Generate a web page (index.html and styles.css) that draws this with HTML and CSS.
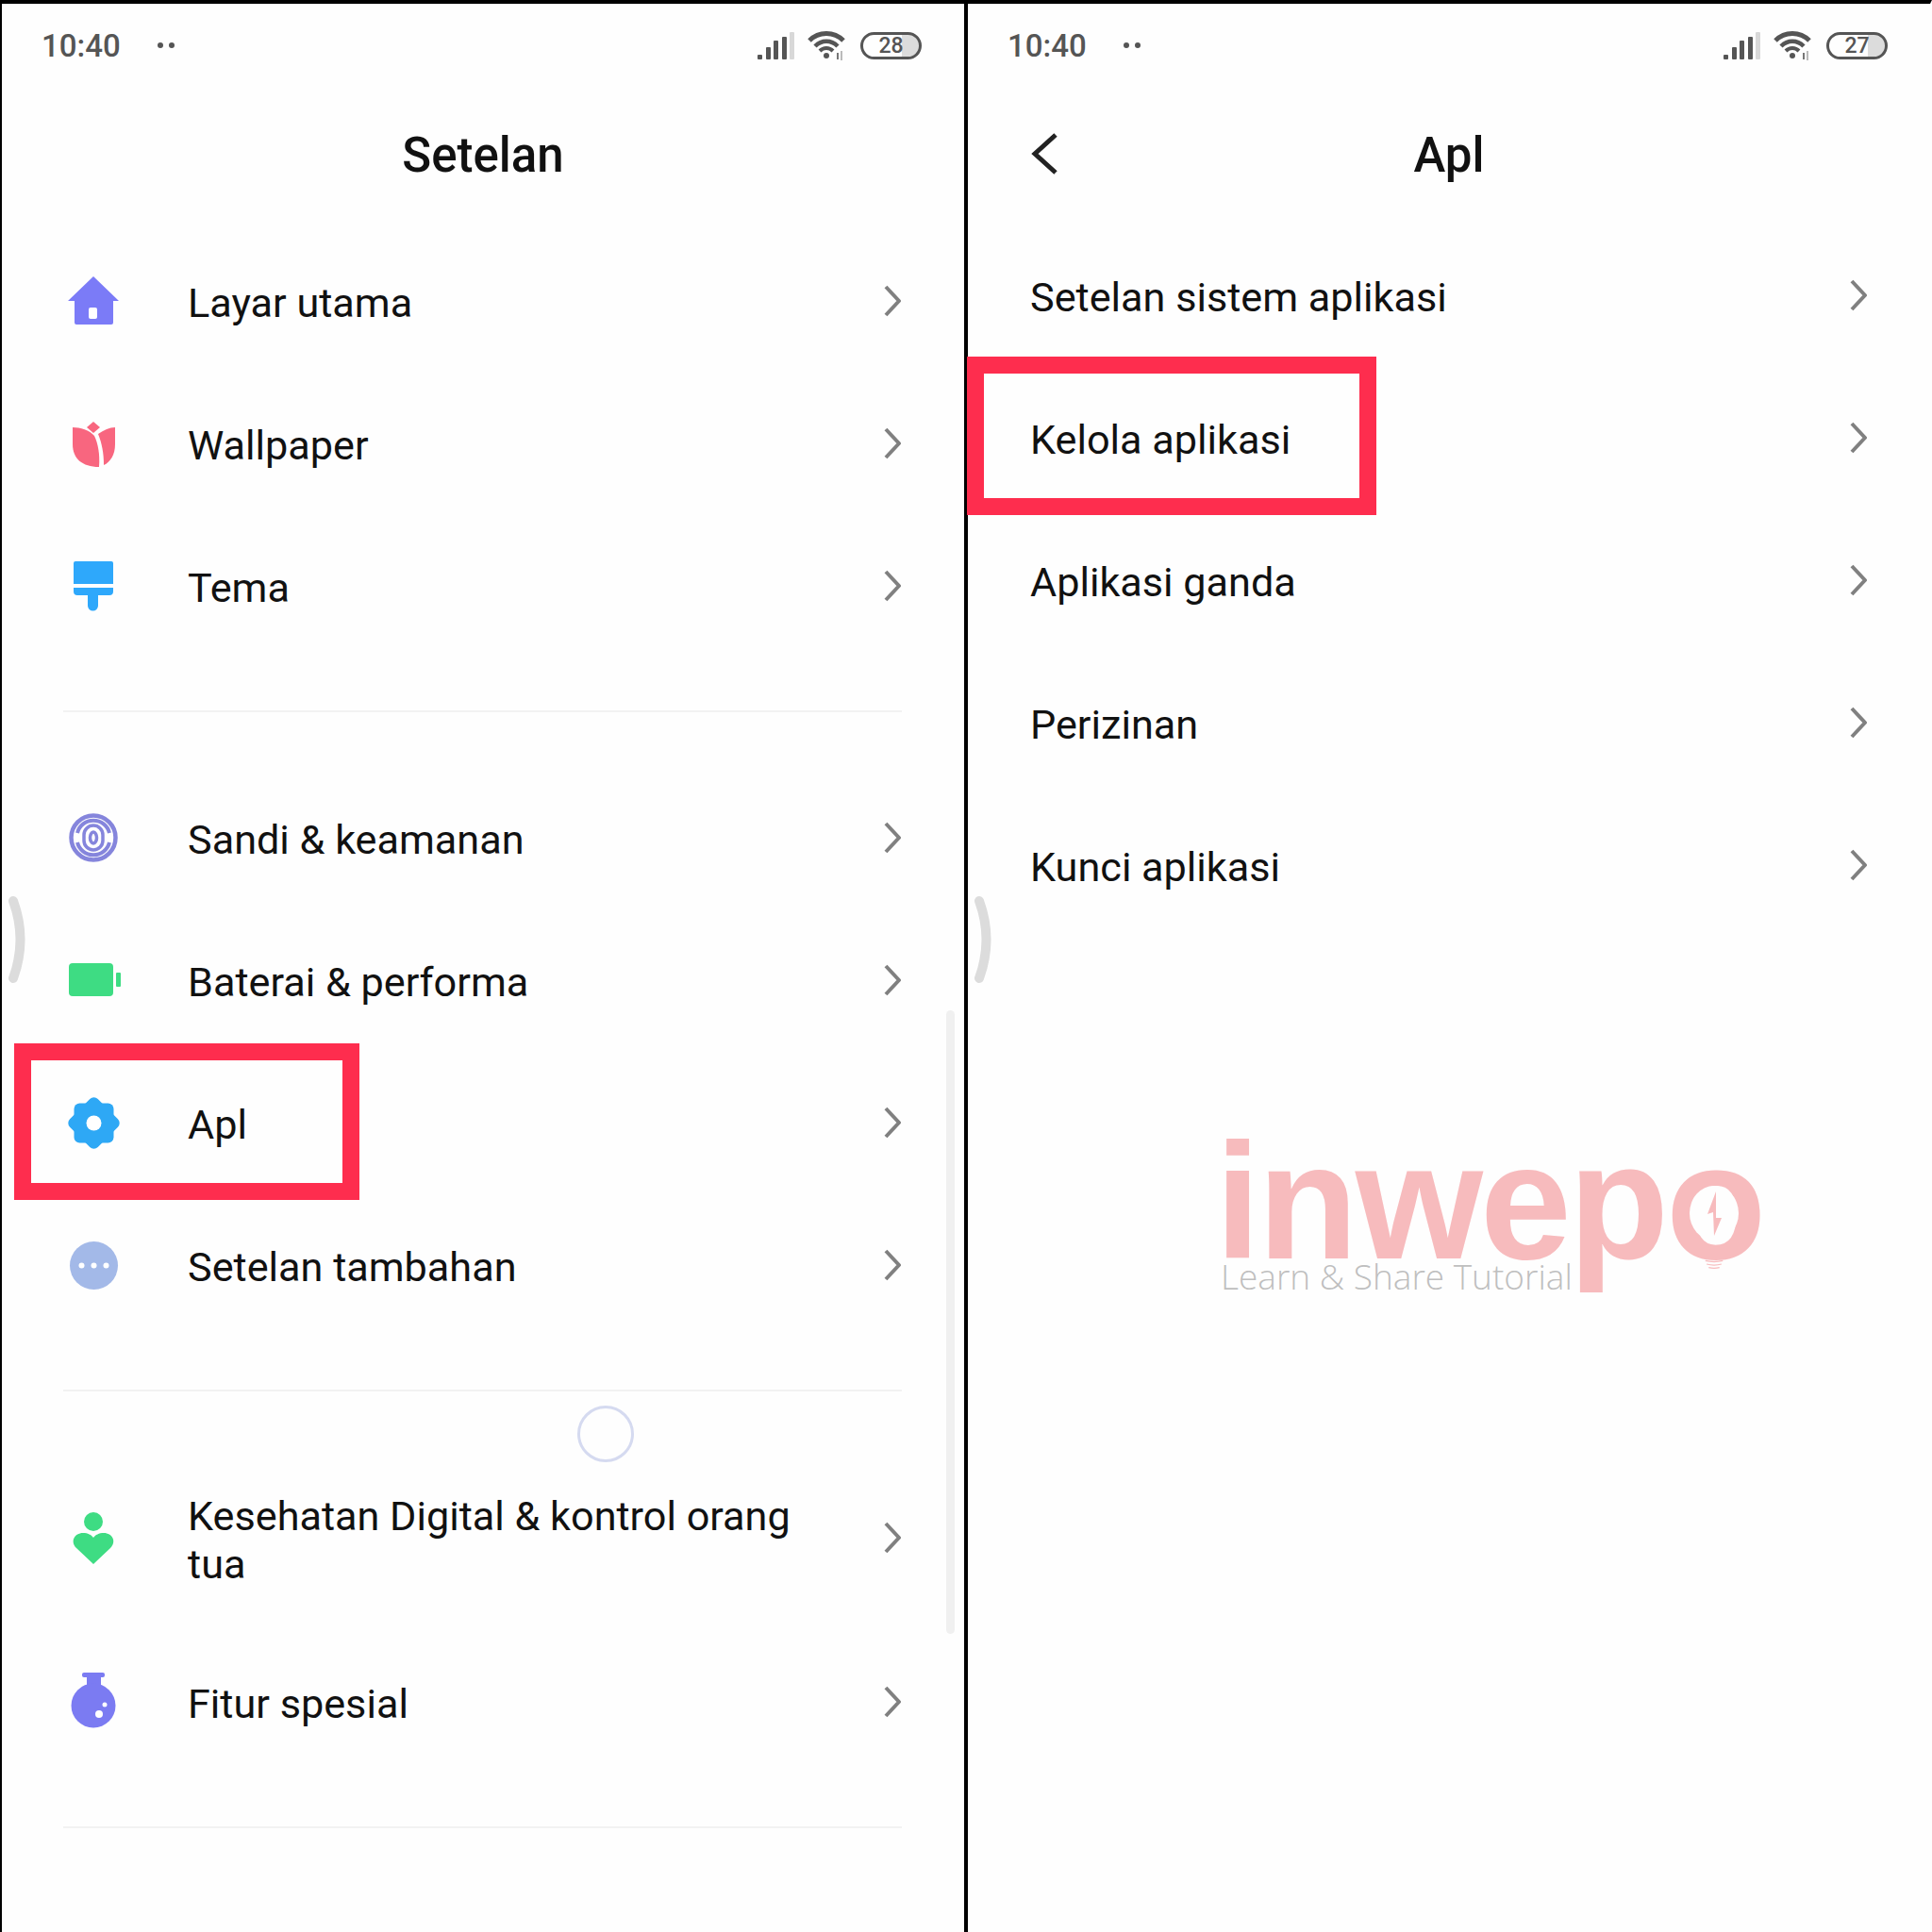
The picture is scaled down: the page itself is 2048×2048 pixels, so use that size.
FILE: index.html
```html
<!DOCTYPE html>
<html lang="en">
<head>
    <meta charset="UTF-8">
    <title>Setelan</title>
    <link rel="stylesheet" href="styles.css">
</head>
<body>
    <svg class="defs" width="0" height="0">
        <symbol id="chevron" viewBox="0 0 18 34"><path d="M2 2 L16 17 L2 32" fill="none" stroke="#808080" stroke-width="4" stroke-linejoin="round"/></symbol>
        <symbol id="signal" viewBox="0 0 39 29">
            <rect x="0" y="24" width="5" height="5" rx="1" fill="#555"/>
            <rect x="9" y="16" width="5" height="13" rx="1" fill="#555"/>
            <rect x="17" y="9" width="5" height="20" rx="1" fill="#555"/>
            <rect x="26" y="5" width="5" height="24" rx="1" fill="#555"/>
            <rect x="34" y="0" width="5" height="29" rx="1" fill="#d8d8d8"/>
        </symbol>
        <symbol id="wifi" viewBox="0 0 40 32">
            <path d="M2 11 C12 1 28 1 38 11" fill="none" stroke="#555" stroke-width="5"/>
            <path d="M8 17 C15 10 25 10 32 17" fill="none" stroke="#555" stroke-width="4.500"/>
            <path d="M13 22 C17 18 23 18 27 22" fill="none" stroke="#555" stroke-width="4"/>
            <circle cx="20" cy="27" r="3" fill="#555"/>
            <rect x="31" y="24" width="2" height="7" fill="#777"/>
            <rect x="35" y="22" width="2" height="10" fill="#bbb"/>
        </symbol>
        <symbol id="handle" viewBox="0 0 20 94"><path d="M6 6 Q21 47 6 88" fill="none" stroke="#dcdcdc" stroke-width="10" stroke-linecap="round"/></symbol>
    </svg>

    <div class="screen">
        <div class="status">
            <span class="time">10:40</span>
            <span class="dots"><i></i><i></i></span>
            <svg class="signal"><use href="#signal"/></svg>
            <svg class="wifi"><use href="#wifi"/></svg>
            <span class="battery">28</span>
        </div>
        <h1 class="title">Setelan</h1>

        <div class="list list-main">
            <div class="row">
                <svg class="icon" viewBox="0 0 64 64"><path d="M32 6 L59 32 L53 32 L53 55 Q53 57 51 57 L14 57 Q12 57 12 55 L12 32 L5 32 Z" fill="#7b7bf7"/><rect x="27" y="39" width="9" height="12" rx="2" fill="#fff"/></svg>
                <span class="label">Layar utama</span>
                <svg class="chevron"><use href="#chevron"/></svg>
            </div>
            <div class="row">
                <svg class="icon" viewBox="0 0 64 64"><path d="M32 9 L39 15 L32 21 L25 15 Z" fill="#f8667f"/><path d="M10 15 C18 15 28 18 33 24 C37 32 39 44 38 57 C20 57 10 48 10 33 Z" fill="#f8667f"/><path d="M55 15 C49 15 43 18 37 22 C41 32 43 42 43 55 C50 52 55 44 55 33 Z" fill="#f8667f"/></svg>
                <span class="label">Wallpaper</span>
                <svg class="chevron"><use href="#chevron"/></svg>
            </div>
            <div class="row">
                <svg class="icon" viewBox="0 0 64 64"><path d="M13 6 L51 6 Q53 6 53 8 L53 30 L11 30 L11 8 Q11 6 13 6 Z" fill="#2ea8fb"/><path d="M11 34 L53 34 L53 38 Q53 42 49 42 L37 42 L37 53 A5.500 5.500 0 0 1 26 53 L26 42 L15 42 Q11 42 11 38 Z" fill="#2ea8fb"/></svg>
                <span class="label">Tema</span>
                <svg class="chevron"><use href="#chevron"/></svg>
            </div>
        </div>
        <hr class="divider">

        <div class="list">
            <div class="row">
                <svg class="icon" viewBox="0 0 64 64" fill="none" stroke="#8585dc"><circle cx="32" cy="32" r="23.500" stroke-width="4.500"/><path d="M15 27 A17.500 17.500 0 0 1 49 27 M49 37 A17.500 17.500 0 0 1 15 37" stroke-width="4"/><path d="M22 29 A10 10 0 0 1 42 29 L42 35 A10 10 0 0 1 22 35 Z" stroke-width="3.500"/><ellipse cx="32" cy="32" rx="3.500" ry="6" stroke-width="3.500"/></svg>
                <span class="label">Sandi &amp; keamanan</span>
                <svg class="chevron"><use href="#chevron"/></svg>
            </div>
            <div class="row">
                <svg class="icon" viewBox="0 0 64 64"><rect x="6" y="14" width="47" height="35" rx="4" fill="#3edc83"/><rect x="56" y="24" width="5" height="15" rx="1" fill="#3edc83"/></svg>
                <span class="label">Baterai &amp; performa</span>
                <svg class="chevron"><use href="#chevron"/></svg>
            </div>
            <div class="row">
                <svg class="icon" viewBox="0 0 64 64"><rect x="11.500" y="11.500" width="42" height="42" rx="6" fill="#2ea8f5"/><rect x="11.500" y="11.500" width="42" height="42" rx="6" fill="#2ea8f5" transform="rotate(45 32.500 32.500)"/><circle cx="32.500" cy="32.500" r="8" fill="#fff"/></svg>
                <span class="label">Apl</span>
                <svg class="chevron"><use href="#chevron"/></svg>
            </div>
            <div class="row">
                <svg class="icon" viewBox="0 0 64 64"><circle cx="32.500" cy="32.500" r="25.500" fill="#a3b9e8"/><circle cx="19.500" cy="32.500" r="3" fill="#fff"/><circle cx="32.500" cy="32.500" r="3" fill="#fff"/><circle cx="45.500" cy="32.500" r="3" fill="#fff"/></svg>
                <span class="label">Setelan tambahan</span>
                <svg class="chevron"><use href="#chevron"/></svg>
            </div>
        </div>
        <hr class="divider">

        <div class="list">
            <div class="row row-tall">
                <svg class="icon" viewBox="0 0 64 64"><circle cx="32" cy="15" r="10" fill="#3edc83"/><path d="M32 60 L14 43 C7 36 12 27 21 27 C26 27 30 29 32 32 C34 29 38 27 43 27 C52 27 57 36 50 43 Z" fill="#3edc83"/></svg>
                <span class="label">Kesehatan Digital &amp; kontrol orang tua</span>
                <svg class="chevron"><use href="#chevron"/></svg>
            </div>
            <div class="row">
                <svg class="icon" viewBox="0 0 64 64"><rect x="20" y="1" width="24" height="5" rx="2" fill="#7b7bf2"/><rect x="25" y="4" width="15" height="12" fill="#7b7bf2"/><circle cx="32" cy="36" r="23.500" fill="#7b7bf2"/><circle cx="38" cy="45" r="4" fill="#fff"/><circle cx="44" cy="35" r="2.500" fill="#fff"/></svg>
                <span class="label">Fitur spesial</span>
                <svg class="chevron"><use href="#chevron"/></svg>
            </div>
        </div>
        <hr class="divider">

        <svg class="handle"><use href="#handle"/></svg>
        <div class="scrollbar"></div>
        <div class="spinner"></div>
        <div class="highlight highlight-apl"></div>
    </div>

    <div class="screen">
        <div class="status">
            <span class="time">10:40</span>
            <span class="dots"><i></i><i></i></span>
            <svg class="signal"><use href="#signal"/></svg>
            <svg class="wifi"><use href="#wifi"/></svg>
            <span class="battery">27</span>
        </div>
        <h1 class="title">Apl</h1>
        <svg class="back" viewBox="0 0 30 46"><path d="M27 3 L5 23 L27 43" fill="none" stroke="#222" stroke-width="5"/></svg>

        <div class="list list-sub">
            <div class="row row-plain">
                <span class="label">Setelan sistem aplikasi</span>
                <svg class="chevron"><use href="#chevron"/></svg>
            </div>
            <div class="row row-plain">
                <span class="label">Kelola aplikasi</span>
                <svg class="chevron"><use href="#chevron"/></svg>
            </div>
            <div class="row row-plain">
                <span class="label">Aplikasi ganda</span>
                <svg class="chevron"><use href="#chevron"/></svg>
            </div>
            <div class="row row-plain">
                <span class="label">Perizinan</span>
                <svg class="chevron"><use href="#chevron"/></svg>
            </div>
            <div class="row row-plain">
                <span class="label">Kunci aplikasi</span>
                <svg class="chevron"><use href="#chevron"/></svg>
            </div>
        </div>

        <svg class="handle"><use href="#handle"/></svg>
        <div class="highlight highlight-kelola"></div>

        <div class="watermark">
            <span class="wm-name">inwepo</span>
            <span class="wm-tag">Learn &amp; Share Tutorial</span>
            <div class="wm-counter"></div>
            <svg class="wm-bolt" viewBox="0 0 16 47"><path d="M9 0 L0 24 L6 22 L7 47 L15 28 L9 28 Z" fill="#f7bbbd"/></svg>
            <svg class="wm-base" viewBox="0 0 28 14"><path d="M1 2 Q14 5 27 2 M3 7 Q14 10 25 7 M6 12 Q14 14 22 12" fill="none" stroke="#f7bbbd" stroke-width="1.800"/></svg>
        </div>
    </div>
</body>
</html>
```

FILE: styles.css
```css
* {
    margin: 0;
    padding: 0;
    box-sizing: border-box;
}

body {
    display: flex;
    width: 2048px;
    height: 2048px;
    background: #000;
    font-family: 'Roboto', sans-serif;
    overflow: hidden;
}

.defs {
    position: absolute;
}

.screen {
    position: relative;
    width: 1024px;
    height: 2048px;
    background: #fefefe;
    border-top: 4px solid #000;
    border-left: 2px solid #000;
    border-right: 2px solid #000;
}

.screen:last-child {
    border-right-color: #fefefe;
}

.status {
    display: flex;
    align-items: center;
    height: 86px;
    padding: 2px 45px 0 42px;
}

.time {
    color: #555;
    font-size: 33px;
    font-weight: 500;
}

.dots {
    display: flex;
    gap: 6px;
    margin-left: 39px;
    margin-right: auto;
}

.dots i {
    width: 6px;
    height: 6px;
    border-radius: 50%;
    background: #555;
}

.signal {
    width: 39px;
    height: 29px;
}

.wifi {
    width: 42px;
    height: 32px;
    margin-left: 13px;
}

.battery {
    width: 65px;
    height: 29px;
    margin-left: 15px;
    border: 3px solid #555;
    border-radius: 15px;
    background: linear-gradient(90deg, #fefefe 70%, #dcdcdc 70%);
    color: #555;
    font-size: 23px;
    font-weight: 500;
    line-height: 23px;
    text-align: center;
}

.title {
    height: 150px;
    color: #111;
    font-size: 51px;
    font-weight: 500;
    line-height: 150px;
    text-align: center;
}

.back {
    position: absolute;
    left: 66px;
    top: 136px;
    width: 30px;
    height: 46px;
}

.list-main {
    margin-top: 3px;
}

.list-sub {
    margin-top: -3px;
}

.row {
    display: flex;
    align-items: center;
    height: 151px;
    padding: 0 67px 0 65px;
}

.row-tall {
    height: 196px;
}

.row-plain {
    padding-left: 66px;
}

.icon {
    flex: none;
    width: 64px;
    height: 64px;
    margin-right: 68px;
}

.label {
    max-width: 680px;
    color: #111;
    font-size: 43.2px;
    line-height: 51px;
    padding-top: 5px;
}

.chevron {
    flex: none;
    width: 18px;
    height: 34px;
    margin-left: auto;
}

.divider {
    height: 2px;
    margin: 57px 66px 57px 65px;
    border: none;
    background: #f2f2f2;
}

.list + .divider:last-of-type {
    margin-bottom: 0;
}

.handle {
    position: absolute;
    left: 6px;
    top: 945px;
    width: 20px;
    height: 94px;
}

.scrollbar {
    position: absolute;
    left: 1001px;
    top: 1067px;
    width: 9px;
    height: 661px;
    border-radius: 5px;
    background: #f0f0f0;
}

.spinner {
    position: absolute;
    left: 610px;
    top: 1486px;
    width: 60px;
    height: 60px;
    border: 3px solid #d5daf0;
    border-radius: 50%;
}

.highlight {
    position: absolute;
    border: 18px solid #fe2d4e;
}

.highlight-apl {
    left: 13px;
    top: 1102px;
    width: 366px;
    height: 166px;
}

.highlight-kelola {
    left: -1px;
    top: 374px;
    width: 434px;
    height: 168px;
}

.watermark {
    position: absolute;
    left: 268px;
    top: 1170px;
    width: 620px;
    height: 220px;
}

.wm-name {
    position: absolute;
    left: -6px;
    top: 0;
    color: #f7bbbd;
    font-family: 'Liberation Sans', sans-serif;
    font-size: 174px;
    font-weight: 700;
    line-height: 200px;
    letter-spacing: -3px;
}

.wm-tag {
    position: absolute;
    left: 0;
    top: 154px;
    color: #bfbfbf;
    font-family: 'Open Sans', sans-serif;
    font-size: 37px;
    font-weight: 300;
    line-height: 50px;
    white-space: nowrap;
}

.wm-counter {
    position: absolute;
    left: 497px;
    top: 83px;
    width: 52px;
    height: 58px;
    border-radius: 50%;
    background: #fefefe;
}

.wm-bolt {
    position: absolute;
    left: 516px;
    top: 89px;
    width: 16px;
    height: 47px;
}

.wm-base {
    position: absolute;
    left: 511px;
    top: 161px;
    width: 24px;
    height: 10px;
}
```
